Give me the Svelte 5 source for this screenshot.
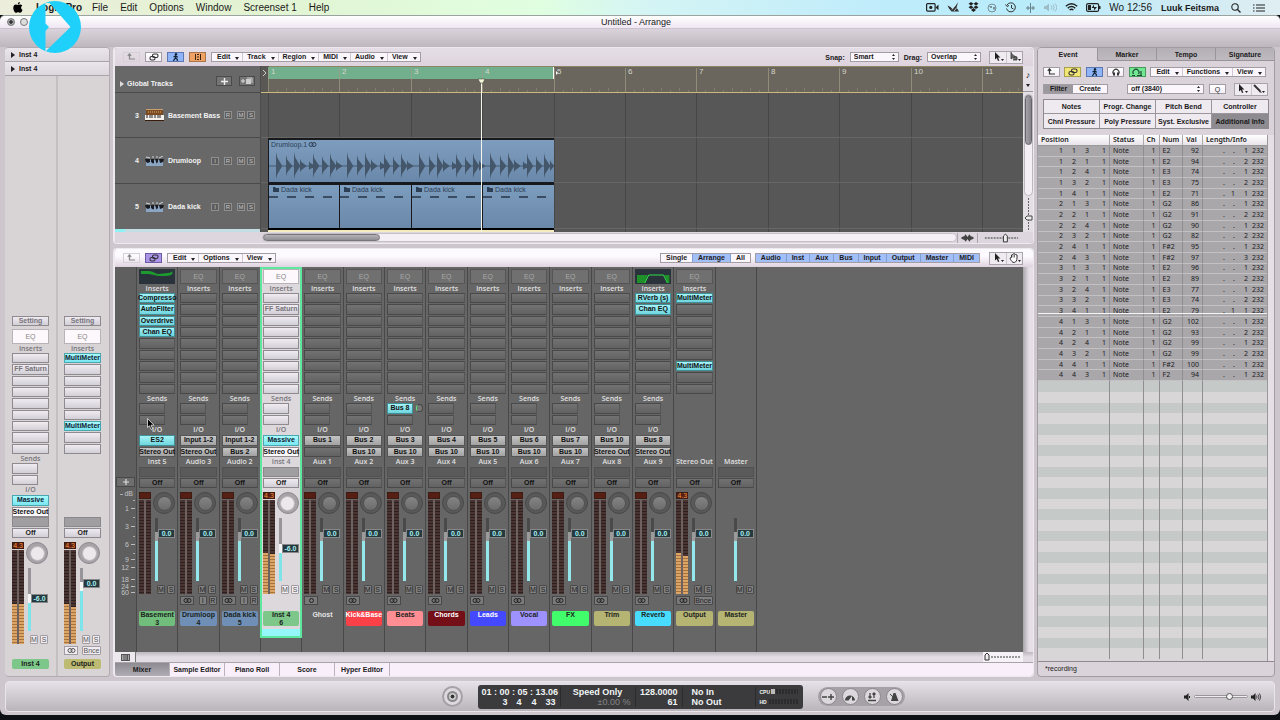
<script lang="ts">
	type Strip = {
		eq?: 'low' | 'band' | 'none';
		inserts?: Record<number, string>;
		noInserts?: boolean;
		sends?: string[] | null;
		io?: string[] | null;
		track?: string;
		level?: number[];
		value?: string;
		noMeter?: boolean;
		solo?: string;
		format?: 'stereo' | 'mono';
		extra?: string[];
		name: string;
		num?: string;
		color: string;
		text?: string;
		selected?: boolean;
	};

	const strips: Strip[] = [
		{ eq: 'low', inserts: { 0: 'Compresso', 1: 'AutoFilter', 2: 'Overdrive', 3: 'Chan EQ' }, io: ['ES2', 'Stereo Out'], track: 'Inst 5', name: 'Basement', num: '3', color: '#70bd7c' },
		{ io: ['Input 1-2', 'Stereo Out'], track: 'Audio 3', format: 'stereo', extra: ['I', 'R'], name: 'Drumloop', num: '4', color: '#6f8fb6' },
		{ io: ['Input 1-2', 'Bus 2'], track: 'Audio 2', format: 'stereo', extra: ['I', 'R'], name: 'Dada kick', num: '5', color: '#6f8fb6' },
		{ inserts: { 1: 'FF Saturn' }, io: ['Massive', 'Stereo Out'], track: 'Inst 4', level: [44, 43], value: '-6.0', name: 'Inst 4', num: '6', color: '#7cc789', selected: true },
		{ io: ['Bus 1', ''], track: 'Aux 1', format: 'mono', name: 'Ghost', color: 'transparent', text: '#e4e4e4' },
		{ io: ['Bus 2', 'Bus 10'], track: 'Aux 2', format: 'stereo', name: 'Kick&Base', color: '#fb4047', text: '#fff' },
		{ sends: ['Bus 8', ''], io: ['Bus 3', 'Bus 10'], track: 'Aux 3', format: 'stereo', name: 'Beats', color: '#ff8e94' },
		{ io: ['Bus 4', 'Bus 10'], track: 'Aux 4', format: 'stereo', name: 'Chords', color: '#740f17', text: '#fff' },
		{ io: ['Bus 5', 'Bus 10'], track: 'Aux 5', format: 'stereo', name: 'Leads', color: '#4448ff', text: '#fff' },
		{ io: ['Bus 6', 'Bus 10'], track: 'Aux 6', format: 'stereo', name: 'Vocal', color: '#9d92ff' },
		{ io: ['Bus 7', 'Bus 10'], track: 'Aux 7', format: 'stereo', name: 'FX', color: '#41fd6b' },
		{ io: ['Bus 10', 'Stereo Out'], track: 'Aux 8', format: 'stereo', name: 'Trim', color: '#b5b473' },
		{ eq: 'band', inserts: { 0: 'RVerb (s)', 1: 'Chan EQ' }, io: ['Bus 8', 'Stereo Out'], track: 'Aux 9', format: 'stereo', name: 'Reverb', color: '#48dcff' },
		{ inserts: { 0: 'MultiMeter', 6: 'MultiMeter' }, sends: null, io: null, track: 'Stereo Out', level: [44, 40], format: 'stereo', extra: ['Bnce'], name: 'Output', color: '#b5b473' },
		{ eq: 'none', noInserts: true, sends: null, io: null, track: 'Master', noMeter: true, solo: 'D', name: 'Master', color: '#b5b473' }
	];

	const sideStrips: Strip[] = [
		{ inserts: { 1: 'FF Saturn' }, io: ['Massive', 'Stereo Out'], level: [43, 43], value: '-6.0', name: 'Inst 4', color: '#7cc789' },
		{ inserts: { 0: 'MultiMeter', 6: 'MultiMeter' }, sends: null, io: null, level: [43, 39], format: 'stereo', extra: ['Bnce'], name: 'Output', color: '#bdba72' }
	];

	const live = ['ES2', 'Massive'];
	const faderPos = (v?: string) => (v === '-6.0' ? 51 : 74);

	const tracks = [
		{ num: 3, name: 'Basement Bass', icon: 'keys', buttons: ['R', 'M', 'S'] },
		{ num: 4, name: 'Drumloop', icon: 'drums', buttons: ['I', 'R', 'M', 'S'] },
		{ num: 5, name: 'Dada kick', icon: 'drums', buttons: ['I', 'R', 'M', 'S'] }
	];

	// timeline geometry
	const START = 7;
	const BAR = 71.4;
	const bars = Array.from({ length: 11 }, (_, i) => i);
	const barX = (i: number) => Math.round(START + i * BAR);

	// [offset in bar, half height]
	const hits = [[8, 14], [18, 11], [26, 14], [32, 7], [41, 5], [45, 13], [54, 10], [62, 13], [68, 6]];
	const wave = [0, 1, 2, 3]
		.flatMap((b) => hits.map(([o, h]) => {
			const x = barX(b) + o;
			const w = Math.min(6, barX(4) - x);
			return `M${x} ${100 - h}L${x + 1.2} ${100 - h * 0.6}L${x + w} 99.5V100.5L${x + 1.2} ${100 + h * 0.6}L${x} ${100 + h - 1}Z`;
		}))
		.join('');

	const notes = [
		['1 1 3 1', 'E2', 92, '. . 1'], ['1 2 1 1', 'E2', 94, '. . 2'], ['1 2 4 1', 'E3', 74, '. . 1'],
		['1 3 2 1', 'E3', 75, '. . 2'], ['1 4 1 1', 'E2', 71, '. 1 1'], ['2 1 3 1', 'G2', 86, '. . 1'],
		['2 2 1 1', 'G2', 91, '. . 2'], ['2 2 4 1', 'G2', 90, '. . 1'], ['2 3 2 1', 'G2', 82, '. . 2'],
		['2 4 1 1', 'F#2', 95, '. . 1'], ['2 4 3 1', 'F#2', 97, '. . 3'], ['3 1 3 1', 'E2', 96, '. . 1'],
		['3 2 1 1', 'E2', 89, '. . 2'], ['3 2 4 1', 'E3', 77, '. . 1'], ['3 3 2 1', 'E3', 74, '. . 2'],
		['3 4 1 1', 'E2', 79, '. 1 1'], ['4 1 3 1', 'G2', 102, '. . 1'], ['4 2 1 1', 'G2', 93, '. . 2'],
		['4 2 4 1', 'G2', 99, '. . 1'], ['4 3 2 1', 'G2', 99, '. . 2'], ['4 4 1 1', 'F#2', 100, '. . 1'],
		['4 4 3 1', 'F2', 94, '. . 1']
	] as [string, string, number, string][];
	const emptyRows = Array.from({ length: 26 }, (_, i) => i);

	const filters = ['Notes', 'Progr. Change', 'Pitch Bend', 'Controller', 'Chnl Pressure', 'Poly Pressure', 'Syst. Exclusive', 'Additional Info'];
	const scale = [['dB', 4], ['1', 19], ['3', 37], ['6', 55], ['9', 70], ['12', 78], ['18', 90], ['24', 97], ['60', 103]] as [string, number][];

	let editor = $state('Mixer');
	let listTab = $state('Event');
</script>

<svelte:head>
	<title>Untitled - Arrange</title>
</svelte:head>

{#snippet pointer()}
	<svg width="11" height="10" viewBox="0 0 11 10"><path d="M2 0v7.5l1.8-1.6L5 9l1.3-.6L5 5.5h2.4z" fill="#222" /><path d="M8 7h3L9.500 9z" fill="#222" /></svg>
{/snippet}

{#snippet back()}
	<svg width="9" height="8" viewBox="0 0 9 8"><path d="M2.500 1v5H8M.8 2.800L2.500.8l1.700 2" fill="none" stroke="currentColor" stroke-width="1.200" /></svg>
{/snippet}

{#snippet chain()}
	<svg width="10" height="8" viewBox="0 0 10 8"><g fill="none" stroke="currentColor" stroke-width="1.100"><rect x="3.500" y="1" width="5.500" height="3.500" rx="1.500" /><rect x="1" y="3.500" width="5" height="3.500" rx="1.500" /></g></svg>
{/snippet}

{#snippet runner()}
	<svg width="9" height="9" viewBox="0 0 9 9"><circle cx="5" cy="1.300" r="1.200" fill="#123" /><path d="M5 2.500L4.300 5.200 2.300 8M4.300 5l2 1.300V8M2.500 4l2-1 2.300 1.300" fill="none" stroke="#123" stroke-width="1.200" /></svg>
{/snippet}

{#snippet rings(mono: boolean)}
	<svg width="9" height="5" viewBox="0 0 9 5"><g fill="none" stroke="currentColor">{#if mono}<circle cx="4.500" cy="2.500" r="2" />{:else}<circle cx="3" cy="2.500" r="2" /><circle cx="6" cy="2.500" r="2" />{/if}</g></svg>
{/snippet}

{#snippet menus(items: string[])}
	<div class="menus">
		{#each items as item}
			<button>{item}<i class="caret"></i></button>
		{/each}
	</div>
{/snippet}

{#snippet channel(s: Strip, side: boolean)}
	<div class="strip" class:light={side || s.selected} class:selected={s.selected} class:side>
		{#if side}<button class="slot setting">Setting</button>{/if}
		{#if s.eq === 'none'}
			<div class="eq-gap"></div>
		{:else if s.eq}
			<svg class="eq-curve" viewBox="0 0 37 15" preserveAspectRatio="none">
				<rect width="37" height="15" fill="#2a323b" />
				{#if s.eq === 'low'}
					<path d="M2 2h8c5 0 6 3 10 3s6-1 9-1 4-1 5-2v3c-3 2-5 2-9 2s-7 0-10-1-6-1-13-1z" fill="#1d9a2e" />
				{:else}
					<path d="M2 6h11l-3 8H2zM30 6h5v8h-2z" fill="#1f8f2a" /><path d="M10 14l4-8h15l4 8" fill="none" stroke="#2fe04a" />
				{/if}
			</svg>
		{:else}
			<button class="eq">EQ</button>
		{/if}
		<div class="caption">{s.noInserts ? '' : 'Inserts'}</div>
		<div class="inserts">
			{#if !s.noInserts}
				{#each Array(9) as _, i}
					<button class="slot" class:on={s.inserts?.[i] && s.inserts[i] !== 'FF Saturn'} aria-label="Insert {i + 1}">{s.inserts?.[i] ?? ''}</button>
				{/each}
			{/if}
		</div>
		<div class="caption">{s.sends === null ? '' : 'Sends'}</div>
		<div class="sends">
			{#if s.sends !== null}
				{#each s.sends ?? ['', ''] as send, i}
					<div class="send">
						<button class="slot" class:on={send} aria-label="Send {i + 1}">{send}</button>
						{#if send}<i class="send-knob"></i>{/if}
					</div>
				{/each}
			{/if}
		</div>
		<div class="caption io-label">{s.io === null ? '' : 'I/O'}</div>
		<div class="io">
			{#each s.io ?? [] as io}
				<button class="slot" class:route={io} class:on={live.includes(io)} aria-label={io || 'No output'}>{io}</button>
			{/each}
		</div>
		{#if !side}<div class="caption track">{s.track}</div>{/if}
		<div class="group"></div>
		<button class="slot auto">Off</button>
		<div class="levels">
			<div class="meter">
				{#if !s.noMeter}
					<div class="peak">{s.level ? '4.3' : ''}</div>
					<div class="bars">
						{#each s.level ?? [0, 0] as l}
							<div class="bar"><div class="fill" style="height: {l}%"></div></div>
						{/each}
					</div>
				{/if}
			</div>
			<div class="controls">
				<div class="pan" class:hidden={s.noMeter}><i></i></div>
				<div class="fader">
					<input type="range" aria-label="{s.name} volume" value={faderPos(s.value)} style="--v: {faderPos(s.value)}%" />
					<output style="bottom: {faderPos(s.value)}%">{s.value ?? '0.0'}</output>
				</div>
				<div class="pair"><button>M</button><button>{s.solo ?? 'S'}</button></div>
			</div>
		</div>
		<div class="format">
			{#if s.format}<button class="rings" aria-label={s.format}>{@render rings(s.format === 'mono')}</button>{/if}
			<div class="pair">
				{#each s.extra ?? [] as e}<button class:wide={e.length > 1}>{e}</button>{/each}
			</div>
		</div>
		<div class="name" style="background: {s.color}; color: {s.text ?? '#1c2420'}">
			<span>{s.name}</span>{#if s.num}<span>{s.num}</span>{/if}
		</div>
	</div>
{/snippet}

<div class="desktop">
	<header class="menubar">
		<svg class="apple" width="10" height="11" viewBox="0 0 10 11"><path d="M6.800 0C5.500.2 4.800 1.200 4.900 2.400 6 2.400 6.900 1.300 6.800 0zM5 3C4.300 3 3.700 2.600 2.900 2.600 1.500 2.600.3 3.800.3 5.900.3 8.300 1.900 10.800 3.100 10.800c.7 0 1.100-.5 2-.5s1.200.5 2 .5c1 0 2-1.700 2.400-2.900C7.700 7 7.700 4.500 9.200 3.700 8.700 2.900 7.900 2.600 7.100 2.600 6.200 2.600 5.700 3 5 3z" /></svg>
		<strong>Logic Pro</strong>
		<nav>
			{#each ['File', 'Edit', 'Options', 'Window', 'Screenset 1', 'Help'] as m}<button>{m}</button>{/each}
		</nav>
		<div class="status">
			<svg width="13" height="9" viewBox="0 0 13 9"><rect x=".6" y=".6" width="8.500" height="7.500" rx="1" fill="none" stroke="#222" stroke-width="1.200" /><circle cx="4.800" cy="4.400" r="1.600" fill="#222" /><path d="M9.500 4.400l3-2.800v5.600z" fill="#222" /></svg>
			<svg width="13" height="11" viewBox="0 0 13 11"><path d="M.5 3.500l3 1.500 2 2L11 .5 9.500 5.500 12 9.500H4.500L2 6.500z" fill="#333" /><path d="M5 7.500l4-5M7 9l2.500-3" stroke="#cfeefa" stroke-width=".8" /></svg>
			<svg width="11" height="11" viewBox="0 0 11 11"><path d="M3 0l2.500 1.800L3 3.500.5 1.800zM8 0l2.500 1.800L8 3.500 5.500 1.800zM3 3.500l2.500 1.800L3 7 .5 5.300zM8 3.500l2.500 1.800L8 7 5.500 5.300zM5.500 6L8 8 5.500 10 3 8z" fill="#222" /></svg>
			<svg width="10" height="10" viewBox="0 0 10 10"><circle cx="5" cy="5" r="4" fill="none" stroke="#7a9096" /><path d="M2 3h3v2H3.500zM6 4h2.500v2.500H6z" fill="#7a9096" /></svg>
			<svg width="12" height="11" viewBox="0 0 12 11"><path d="M2 3a4.500 4.500 0 1 1-.5 3.500M6.500 3v3l2 1M.5 2.500L2 4.500l2-1" fill="none" stroke="#333" /></svg>
			<svg width="11" height="10" viewBox="0 0 11 10"><path d="M5.500 0v10M1 5h9M3 3v4M8 3v4" stroke="#6a8088" fill="none" /></svg>
			<svg width="13" height="9" viewBox="0 0 13 9"><path d="M0 3h2l3-2.500v8L2 6H0z" fill="#9fbcc6" /><path d="M7 2.500q1.500 2 0 4M9 1.500q2.500 3 0 6M11 .5q3.500 4 0 8" fill="none" stroke="#9fbcc6" /></svg>
			<svg width="13" height="9" viewBox="0 0 13 9"><path d="M.8 3.300q5.700-5 11.400 0M2.700 5.200q3.800-3.300 7.600 0M4.600 7q1.900-1.600 3.800 0" fill="none" stroke="#222" stroke-width="1.400" /></svg>
			<svg width="15" height="9" viewBox="0 0 15 9"><rect x=".6" y=".6" width="12" height="7.800" rx="1.500" fill="none" stroke="#222" stroke-width="1.200" /><path d="M2 2h3v5H2zM8 1.500L5.500 5H8v2.500L11 4H8zM13 3h1.500v3H13z" fill="#222" /></svg>
			<span>Wo 12:56</span>
			<b>Luuk Feitsma</b>
			<svg width="10" height="10" viewBox="0 0 10 10"><circle cx="4" cy="4" r="3.200" fill="none" stroke="#222" stroke-width="1.100" /><path d="M6.300 6.300L9.500 9.500" stroke="#222" stroke-width="1.300" /></svg>
			<svg width="12" height="8" viewBox="0 0 12 8"><path d="M0 1h1.500M3 1h9M0 4h1.500M3 4h9M0 7h1.500M3 7h9" stroke="#222" stroke-width="1.200" /></svg>
		</div>
	</header>

	<div class="window">
		<div class="titlebar">
			<div class="lights"><i></i><i></i></div>
			<h1>Untitled - Arrange</h1>
		</div>
		<div class="toolband"></div>

		<div class="main">
			<aside class="inspector panel">
				<button class="fold"><i class="tri"></i>Inst 4</button>
				<button class="fold"><i class="tri"></i>Inst 4</button>
				<div class="side-strips">
					{#each sideStrips as s}{@render channel(s, true)}{/each}
				</div>
			</aside>

			<div class="center">
				<section class="arrange panel">
					<div class="toolbar">
						<button class="tool ghost" aria-label="Back">{@render back()}</button>
						<button class="tool" aria-label="Link">{@render chain()}</button>
						<button class="tool blue" aria-label="Catch">{@render runner()}</button>
						<button class="tool orange" aria-label="Flex">
							<svg width="8" height="8" viewBox="0 0 8 8"><path d="M1.500 1v6M6.500 1v6" stroke="#3a2410" fill="none" /><path d="M3 1.500h2M3 4h2M3 6.500h2" stroke="#3a2410" /></svg>
						</button>
						{@render menus(['Edit', 'Track', 'Region', 'MIDI', 'Audio', 'View'])}
						<div class="right-tools">
							<label for="snap">Snap:</label>
							<select id="snap" class="snap"><option>Smart</option></select>
							<label for="drag">Drag:</label>
							<select id="drag" class="drag"><option>Overlap</option></select>
							<div class="cursor-tools">
								<button aria-label="Pointer">{@render pointer()}</button>
								<button aria-label="Second tool"><svg width="12" height="10" viewBox="0 0 12 10"><path d="M2 0v7l2-1.500 1 .5V3.500M5 4l3 1v3H4" fill="#666" stroke="#333" stroke-width=".8" /><path d="M9 7h3l-1.500 2z" fill="#222" /></svg></button>
							</div>
						</div>
					</div>
					<div class="arrange-body">
						<div class="track-list">
							<div class="global">
								<i class="tri"></i><b>Global Tracks</b>
								<button aria-label="Add track"><svg width="7" height="7" viewBox="0 0 7 7"><path d="M3.500 0v7M0 3.500h7" stroke="#eee" stroke-width="1.400" /></svg></button>
								<button aria-label="Duplicate track"><svg width="12" height="8" viewBox="0 0 12 8"><path d="M0 4h4M2 2v4" stroke="#ddd" /><rect x="5" y="2" width="5" height="5" fill="#ccc" /><path d="M6 1h5v5" stroke="#ccc" fill="none" /></svg></button>
							</div>
							{#each tracks as t}
								<div class="track-head">
									<span class="num">{t.num}</span>
									{#if t.icon === 'keys'}
										<svg width="19" height="12" viewBox="0 0 19 12"><rect x="1" width="17" height="6" fill="#7a4a22" /><path d="M1 .5h17" stroke="#caa070" /><path d="M3 3h13" stroke="#e0b060" stroke-dasharray="1 1" /><rect y="6" width="19" height="5" fill="#f3f0ec" /><path d="M2 6v3M5 6v3M7 6v3M10 6v3M13 6v3M15 6v3" stroke="#222" /><path d="M0 11.500h19" stroke="#3a1a08" /></svg>
									{:else}
										<svg width="19" height="10" viewBox="0 0 19 10"><path d="M1 4h17v6H1z" fill="#8ba6c4" /><path d="M0 3h5v3l-2 1-2-1zM6 3h3v4l-1 .5L6 6zM10 3h3v3l-1.500 1.500zM14 3h5l-1 3-3 1z" fill="#191c22" /><path d="M1 1l4 1M8 0v2M12 0v2M18 0l-4 2" stroke="#cfd6e0" /></svg>
									{/if}
									<b>{t.name}</b>
									<div class="mini">
										{#each t.buttons as b}<button>{b}</button>{/each}
									</div>
								</div>
							{/each}
							<div class="next-track"></div>
						</div>
						<svg class="timeline" height="166">
							<defs>
								<linearGradient id="region" x1="0" x2="0" y1="0" y2="1"><stop offset="0" stop-color="#7d9dbf" /><stop offset="1" stop-color="#6a88a9" /></linearGradient>
							</defs>
							<rect width="100%" height="166" fill="#575757" />
							<rect width="100%" height="26" fill="#6a665d" />
							<rect width="100%" height="1" fill="#8c8463" />
							<rect width="8" height="26" fill="#5a5854" />
							<path d="M2 4l3 3-3 3" fill="none" stroke="#ccc" />
							<rect x={START} y="1" width={barX(4) - START} height="12" fill="#72b08d" />
							{#each bars as i}
								<path d="M{barX(i) + 0.5} 26v140" stroke="#474747" />
								<path d="M{barX(i) + 0.5} 2v24" stroke="#a39d84" stroke-opacity=".7" />
								{#each [1, 2, 3, 4, 5, 6, 7] as q}<path d="M{barX(i) + q * 9 + 0.5} {q % 2 ? 24 : 22}v3" stroke="#8d8670" stroke-opacity=".7" />{/each}
								<text x={barX(i) + 3} y="8" font-size="8" fill="#d6d6cc">{i + 1}</text>
							{/each}
							<path d="M0 26.500h2000" stroke="#cdb97c" />
							<path d="M0 71.500h2000M0 116.500h2000M0 162.500h2000" stroke="#666" />
							<path d="M292.500 1v12" stroke="#fff" stroke-width="1" />
							<path d="M295 5l2 2-2 2z" fill="#fff" />
							<rect x={START} y="72" width={barX(4) - START} height="45" fill="#17191c" />
							<rect x={START + 1} y="74" width={barX(4) - START - 1} height="42" fill="url(#region)" />
							<path d="M{START + 1} 100h{barX(4) - START - 2}" stroke="#46586c" />
							<path d={wave} fill="#43566a" />
							<text x={START + 3} y="81" font-size="7" fill="#2d3f54">Drumloop.1</text>
							<g fill="none" stroke="#2d3f54"><circle cx="50" cy="78.500" r="2" /><circle cx="53" cy="78.500" r="2" /></g>
							{#each [0, 1, 2, 3] as i}
								<rect x={barX(i)} y="117" width={barX(i + 1) - barX(i)} height="46" fill="#17191c" />
								<rect x={barX(i) + 1} y="119" width={barX(i + 1) - barX(i) - 1} height="43" fill="url(#region)" />
								<path d="M{barX(i) + 5} 121h2l1 1h3v4h-6z" fill="#2d3f54" />
								<text x={barX(i) + 13} y="126" font-size="7" fill="#2d3f54">Dada kick</text>
								<path d="M{barX(i) + 1} 131h9m9 0h9m9 0h9m9 0h9" stroke="#3a4c61" stroke-width="2" />
							{/each}
							<rect x={START} y="162" width={barX(4) - START} height="2" fill="#000" />
							<rect x={START} y="164" width={barX(4) - START} height="2" fill="#f4ecc0" />
							<path d="M220.500 13v153" stroke="#f6f6ea" />
							<path d="M217 13h7l-2 4h-3z" fill="#f4f8d8" stroke="#333" stroke-width=".5" />
						</svg>
						<div class="vscroll">
							<div class="note-menu"><span>♪</span><i class="caret"></i></div>
							<div class="rail"><i></i></div>
							<svg class="vzoom" width="9" height="36" viewBox="0 0 9 36"><path d="M4.500 2v33" stroke="#666" stroke-dasharray="2 1" /><path d="M1 22l2-2h5v4H3z" fill="#eee" stroke="#444" /></svg>
						</div>
					</div>
					<div class="hscroll">
						<div class="gutter"></div>
						<div class="rail"><i></i></div>
						<svg width="20" height="10" viewBox="0 0 20 10"><path d="M3 5l3-2v1l2-3 2 3 2-3 2 3V3l3 2-3 2V6l-2 3-2-3-2 3-2-3v1z" fill="#444" /></svg>
						<svg class="zoomer" width="46" height="10" viewBox="0 0 46 10"><path d="M7 5h34" stroke="#888" stroke-dasharray="2 1" stroke-width="2" /><path d="M26 3l2-2 2 2v6h-4z" fill="#eee" stroke="#333" /></svg>
					</div>
				</section>

				<section class="mixer panel">
					<div class="toolbar">
						<button class="tool ghost" aria-label="Back">{@render back()}</button>
						<button class="tool violet" aria-label="Link">{@render chain()}</button>
						{@render menus(['Edit', 'Options', 'View'])}
						<div class="right-tools">
							<div class="segments">
								{#each ['Single', 'Arrange', 'All'] as v}<button class:active={v === 'Arrange'}>{v}</button>{/each}
							</div>
							<div class="segments">
								{#each ['Audio', 'Inst', 'Aux', 'Bus', 'Input', 'Output', 'Master', 'MIDI'] as v}<button class="active">{v}</button>{/each}
							</div>
							<div class="cursor-tools">
								<button aria-label="Pointer">{@render pointer()}</button>
								<button aria-label="Hand"><svg width="12" height="10" viewBox="0 0 12 10"><path d="M1 5l1.500-.5V2l1.300-.6L5 .6l1.300.8L8 2v3c0 2.500-1 4-2.500 4.400H4C2.500 8.500 1.500 6.500 1 5z" fill="#fff" stroke="#333" /><path d="M4 2v2.500M5.500 1.500v3" stroke="#333" stroke-width=".7" /><path d="M9 7h3l-1.500 2z" fill="#222" /></svg></button>
							</div>
						</div>
					</div>
					<div class="mixer-body">
						<div class="scale">
							<button class="add" aria-label="Add channel"><svg width="6" height="6" viewBox="0 0 6 6"><path d="M3 0v6M0 3h6" stroke="#ddd" stroke-width="1.200" /></svg></button>
							<svg width="21" height="110" viewBox="0 0 21 110">
								{#each scale as [label, y]}
									<text x={label === 'dB' ? 18 : 14} y={y + 3} font-size="7" text-anchor="end" fill="#c4c4c4">{label}</text>
									{#if label !== 'dB'}<path d="M16 {y + 0.5}h4" stroke="#bbb" />{/if}
								{/each}
								<path d="M5 5.500h3M18 11.500h2M18 28.500h2M18 47.500h2M18 64.500h2" stroke="#aaa" />
							</svg>
						</div>
						<div class="strips">
							{#each strips as s}
								<div class="cell">{@render channel(s, false)}</div>
							{/each}
						</div>
						<div class="rail-v"></div>
					</div>
					<div class="mixer-foot">
						<div class="foot-icon"><svg width="9" height="7" viewBox="0 0 9 7"><rect x=".5" y=".5" width="8" height="6" fill="#aaa" stroke="#555" /><path d="M3 1v5M5 1v5M6.500 1v5" stroke="#555" /></svg></div>
						<svg width="40" height="10" viewBox="0 0 40 10"><path d="M8 5h30" stroke="#999" stroke-width="2" stroke-dasharray="2 1" /><path d="M2 3l2-2 2 2v5H2z" fill="#eee" stroke="#333" /></svg>
					</div>
					<nav class="tabs">
						{#each ['Mixer', 'Sample Editor', 'Piano Roll', 'Score', 'Hyper Editor'] as t}
							<button class:active={editor === t} onclick={() => (editor = t)}>{t}</button>
						{/each}
					</nav>
				</section>
			</div>

			<aside class="lists panel">
				<nav class="list-tabs">
					{#each ['Event', 'Marker', 'Tempo', 'Signature'] as t}
						<button class:active={listTab === t} onclick={() => (listTab = t)}>{t}</button>
					{/each}
				</nav>
				<div class="list-tools">
					<button class="tool" aria-label="Back">{@render back()}</button>
					<button class="tool yellow" aria-label="Link">{@render chain()}</button>
					<button class="tool blue" aria-label="Catch">{@render runner()}</button>
					<button class="tool" aria-label="Listen"><svg width="10" height="8" viewBox="0 0 10 8"><path d="M2.500 6a3 3 0 1 1 5 0" fill="none" stroke="#333" stroke-width="1.200" /><path d="M2 4.500h2v3H2zM6 4.500h2v3H6z" fill="#333" /></svg></button>
					<button class="tool green" aria-label="MIDI out"><svg width="12" height="8" viewBox="0 0 12 8"><path d="M2.500 6a3 3 0 1 1 5 0M1 7.500h3M6 7.500h5M10 3v4" fill="none" stroke="#243" stroke-width="1.200" /></svg></button>
					{@render menus(['Edit', 'Functions', 'View'])}
				</div>
				<div class="list-tools second">
					<div class="segments grey"><button class="active">Filter</button><button>Create</button></div>
					<select aria-label="Quantize" class="quant"><option>off (3840)</option></select>
					<button class="tool">Q</button>
					<div class="cursor-tools">
						<button aria-label="Pointer">{@render pointer()}</button>
						<button aria-label="Pencil"><svg width="12" height="10" viewBox="0 0 12 10"><path d="M1 1l6 6" stroke="#333" stroke-width="2" /><path d="M7 6l2 3-3-1z" fill="#333" /><path d="M9 7h3l-1.500 2z" fill="#222" /></svg></button>
					</div>
				</div>
				<div class="filters">
					{#each filters as f}<button class:active={f === 'Additional Info'}>{f}</button>{/each}
				</div>
				<div class="events">
					<table>
						<colgroup><col class="c-pos" /><col class="c-status" /><col class="c-ch" /><col class="c-num" /><col class="c-val" /><col /></colgroup>
						<thead>
							<tr><th>Position</th><th>Status</th><th>Ch</th><th>Num</th><th>Val</th><th>Length/Info</th></tr>
						</thead>
						<tbody>
							{#each notes as [pos, num, val, len], i}
								<tr class="note" class:current={i === 15}>
									<td><div class="pos">{#each pos.split(' ') as p}<span>{p}</span>{/each}</div></td>
									<td>Note</td>
									<td class="r">1</td>
									<td>{num}</td>
									<td class="r">{val}</td>
									<td><div class="len">{#each len.split(' ') as p}<span>{p}</span>{/each}<span>232</span></div></td>
								</tr>
							{/each}
							{#each emptyRows as _}
								<tr class="empty"><td></td><td></td><td></td><td></td><td></td><td></td></tr>
							{/each}
						</tbody>
					</table>
					<div class="rail-v"></div>
				</div>
				<div class="list-status">*recording</div>
			</aside>
		</div>

		<footer class="transport">
			<div class="rec-side"><button class="record" aria-label="Record"><i></i></button></div>
			<div class="lcd">
				<div class="time"><span>01 : 00 : 05 : 13.06</span><div class="beats"><span>3</span><span>4</span><span>4</span><span>33</span></div></div>
				<div class="speed"><span>Speed Only</span><span class="dim">±0.00 %</span></div>
				<div class="tempo"><span>128.0000</span><span>61</span></div>
				<div class="midi"><span>No In</span><span>No Out</span></div>
				<div class="cpu"><span>CPU <i></i><em></em></span><span>HD <em></em></span></div>
			</div>
			<div class="mode-side">
				<div class="modes">
					<button aria-label="Replace"><svg width="12" height="12" viewBox="0 0 12 12"><path d="M0 6h5M6 6h6M9 3v6" stroke="#444" stroke-width="1.400" /></svg></button>
					<button aria-label="Tuner"><svg width="12" height="12" viewBox="0 0 12 12"><path d="M1 9.500a5 5 0 1 1 10 0H8L8 5 4.500 9.500z" fill="#444" /></svg></button>
					<button aria-label="Sync"><svg width="12" height="12" viewBox="0 0 12 12"><path d="M2 9.500h8M4 2v5M8 2v5M2.500 5.500L4 7l1.500-1.500M6.500 3.500L8 2l1.500 1.500" fill="none" stroke="#444" stroke-width="1.300" /></svg></button>
					<button aria-label="Metronome"><svg width="12" height="12" viewBox="0 0 12 12"><path d="M5.500 2h2l3 8H3z" fill="#444" /><path d="M2 3l5 5" stroke="#444" /></svg></button>
				</div>
				<div class="volume">
					<svg width="7" height="8" viewBox="0 0 7 8"><path d="M0 2.500h2L4.500 0v8L2 5.500H0z" fill="#222" /><path d="M5.500 3v2" stroke="#222" /></svg>
					<input type="range" aria-label="Master volume" value="70" />
					<svg width="10" height="8" viewBox="0 0 10 8"><path d="M0 2.500h2L4.500 0v8L2 5.500H0z" fill="#222" /><path d="M5.500 2.500q1 1.500 0 3M7 1.500q2 2.500 0 5M8.500.5q2.500 3.500 0 7" fill="none" stroke="#222" stroke-width=".8" /></svg>
				</div>
			</div>
		</footer>
	</div>

	<svg class="badge" width="54" height="54" viewBox="0 0 54 54"><path fill-rule="evenodd" d="M27 1a26 26 0 1 1 0 52 26 26 0 1 1 0-52zM17.500 3v20.500l3.500 3.500-3.500 4v20.500L42.500 27 21.500 3z" fill="#1ed0fa" /></svg>
	<svg class="mouse" width="8" height="12" viewBox="0 0 8 12"><path d="M.5.5v9l2-1.800L4 11.500l1.500-.7L4 7.200h3z" fill="#000" stroke="#fff" stroke-width=".7" /></svg>
</div>

<style>
	:global(body) { background: #0d1116; }
	.desktop {
		position: relative;
		display: flex;
		flex-direction: column;
		min-height: 100vh;
		box-sizing: border-box;
		padding-bottom: 5px;
		font: 7px/9px "Liberation Sans", Arial, sans-serif;
		color: #1a1a1a;
	}
	.desktop :global(*) { box-sizing: border-box; }
	svg { flex: none; display: block; }
	button {
		font: inherit;
		color: inherit;
		border: 0;
		padding: 0;
		margin: 0;
		background: none;
		white-space: nowrap;
	}
	.menubar {
		display: flex;
		align-items: center;
		height: 15px;
		padding: 0 15px 0 13px;
		font-size: 10px;
		line-height: 14px;
		background: linear-gradient(90deg, #eceedb, #e2f3d2 20%, #e0ffe0 42%, #d5f5f4 50%, #c0ecfb 68%, #b9ecfb 80%, #cdeaf4 92%, #dfeef2);
	}
	.menubar strong { margin-left: 13px; width: 56px; }
	.menubar nav { display: flex; gap: 12px; }
	.status { margin-left: auto; display: flex; align-items: center; gap: 8px; }
	.status b { margin: 0 4px 0 1px; font-size: 9px; }
	.status > svg:last-child { margin-left: 4px; }

	.window {
		flex: 1;
		display: flex;
		flex-direction: column;
		border-top: 1px solid #9ba3a0;
		border-radius: 5px 5px 6px 6px;
		background: #cdc7cd;
	}
	.titlebar {
		position: relative;
		display: flex;
		justify-content: center;
		align-items: center;
		height: 12px;
		padding-right: 8px;
		background: linear-gradient(#fff, #efe6f2);
		border-radius: 5px 5px 0 0;
	}
	.titlebar h1 { margin: 0; font-size: 9px; font-weight: normal; line-height: 12px; }
	.lights { position: absolute; left: 7px; display: flex; gap: 5px; }
	.lights i { width: 8px; height: 8px; border-radius: 50%; border: 1px solid #777; background: #ddd; }
	.lights i:first-child { background: radial-gradient(#333 35%, #aaa 45%); }
	.toolband { height: 19px; border-top: 1px solid #cbc3cd; background: linear-gradient(#dad3db, #bdb8bd); }

	.main { flex: 1; display: flex; gap: 3px; padding: 0 5px 0 5px; min-height: 0; }
	.panel { background: #ddd6de; border-radius: 4px; overflow: hidden; }

	/* inspector */
	.inspector { width: 105px; flex: none; display: flex; flex-direction: column; background: #d8d4d6; border: 1px solid #b1acb1; border-left: 0; }
	.fold {
		display: flex;
		align-items: center;
		height: 14px;
		gap: 4px;
		padding-left: 6px;
		border-bottom: 1px solid #a9a4a9;
		background: linear-gradient(#ebe6ec, #dcd7dc);
		font-weight: bold;
	}
	.tri { width: 0; height: 0; border-left: 4px solid #222; border-top: 3px solid transparent; border-bottom: 3px solid transparent; }
	.side-strips { flex: 1; display: grid; grid-template-columns: 52px 52px; align-items: end; background: linear-gradient(90deg, transparent 51px, #c3bfc2 51px 53px, transparent 53px); }

	/* toolbars */
	.center { flex: 1; min-width: 0; display: flex; flex-direction: column; gap: 4px; }
	.arrange, .mixer { border: 1px solid #8f8b90; border-width: 1px 1px 1px 2px; border-color: #eee9ef; box-shadow: inset 0 0 0 1px #8f8b90; }
	.toolbar {
		display: flex;
		align-items: center;
		height: 18px;
		padding: 0 10px 0 8px;
		background: linear-gradient(#e6dee7, #ddd3de);
		font-weight: bold;
	}
	.mixer .toolbar { background: linear-gradient(#fdfaff 40%, #dfd3e0); }
	.tool {
		display: flex;
		align-items: center;
		justify-content: center;
		width: 17px;
		height: 10px;
		border: 1px solid #a29ca5;
		background: linear-gradient(#fff, #f3eef5);
		color: #333;
	}
	.toolbar .tool { margin-right: 5px; }
	.tool.ghost { border-color: #d8d0d9; background: none; color: #888; }
	.tool.blue { background: #8fb4f8; border-color: #5d78b0; }
	.tool.orange { background: #f0a264; border-color: #a8744a; }
	.tool.violet { background: #a994e8; border-color: #6d5aa5; }
	.tool.yellow { background: #f1e676; border-color: #a9a04e; }
	.tool.green { background: #6fe891; border-color: #4a9a60; }
	.menus { display: flex; height: 10px; padding-left: 1px; border: 1px solid #a29ca5; background: #fbf6fc; font-weight: bold; }
	.menus button { display: flex; align-items: center; gap: 5px; padding: 0 3px 0 4px; line-height: 8px; }
	.menus button + button { border-left: 1px solid #cfc8d0; }
	.caret { width: 0; height: 0; border-top: 3px solid #222; border-left: 2px solid transparent; border-right: 2px solid transparent; margin-top: 3px; }
	.right-tools { margin-left: auto; display: flex; align-items: center; gap: 5px; }
	select {
		appearance: none;
		height: 10px;
		padding: 0 3px;
		border: 1px solid #a29ca5;
		border-radius: 0;
		font: bold 7px/8px "Liberation Sans", Arial, sans-serif;
		color: #1a1a1a;
		background: #fbf6fc url("data:image/svg+xml,%3Csvg xmlns='http://www.w3.org/2000/svg' width='5' height='8'%3E%3Cpath d='M0 3l1.500-2L3 3zM0 5l1.500 2L3 5z' fill='%23222'/%3E%3C/svg%3E") no-repeat right 1px center;
	}
	.snap { width: 49px; }
	.drag { width: 54px; }
	.cursor-tools { display: flex; height: 13px; border: 1px solid #a9a3ab; background: #f0eaf1; margin-left: 3px; }
	.cursor-tools button { display: flex; align-items: center; justify-content: center; width: 16px; }
	.cursor-tools button + button { border-left: 1px solid #cbc5cc; }

	/* arrange */
	.arrange { height: 197px; flex: none; display: flex; flex-direction: column; }
	.arrange-body { display: flex; height: 166px; }
	.track-list { width: 146px; flex: none; background: #686868; color: #f2f2f2; border-right: 1px solid #4c4c4c; }
	.global { display: flex; align-items: center; gap: 3px; height: 26px; padding: 9px 5px 0 5px; }
	.global .tri { border-left-color: #ddd; }
	.global b { margin-right: auto; }
	.global button { display: flex; align-items: center; justify-content: center; width: 16px; height: 10px; margin: -5px 0 0 4px; border: 1px solid #4b4b4b; background: #757575; }
	.track-head {
		display: flex;
		align-items: center;
		height: 45px;
		border-top: 1px solid #4a4a4a;
		padding: 0 5px 0 20px;
	}
	.track-head + .track-head { height: 46px; }
	.num { width: 10px; font-weight: bold; }
	.track-head b { margin-left: 4px; }
	.mini { margin-left: auto; display: flex; gap: 3px; }
	.mini button { width: 8px; height: 8px; font-size: 6px; line-height: 6px; border: 1px solid #8f8f8f; background: #5c5c5c; color: #c8c8c8; }
	.mini button:nth-last-child(3), .mini button:nth-last-child(4) { margin-right: 2px; }
	.mini button:last-child { margin-left: -1px; }
	.next-track { height: 3px; background: linear-gradient(90deg, #8ff3f3 10px, #c3dfe5 10px); }
	.timeline { flex: 1; min-width: 0; font-family: "Liberation Sans", Arial, sans-serif; }
	.vscroll { width: 10px; flex: none; display: flex; flex-direction: column; align-items: center; background: #e4dee5; }
	.note-menu { display: flex; flex-direction: column; align-items: center; height: 26px; width: 100%; font-size: 9px; line-height: 18px; border-bottom: 1px solid #999; }
	.note-menu .caret { margin: 0; }
	.vscroll .rail { flex: 1; width: 9px; margin-top: 2px; border-radius: 5px; background: #f3eff4; border: 1px solid #bdb7be; }
	.vscroll .rail i { display: block; height: 50px; border-radius: 5px; border: 1px solid #66636a; background: linear-gradient(90deg, #a5a2a8, #858288); }
	.hscroll { flex: 1; display: flex; align-items: center; padding-right: 10px; background: #ddd6de; }
	.hscroll .gutter { width: 147px; }
	.hscroll .rail { flex: 1; height: 9px; border: 1px solid #c5bfc6; border-radius: 5px; background: #f3eff4; }
	.hscroll .rail i { display: block; width: 117px; height: 7px; border-radius: 4px; border: 1px solid #77747a; background: linear-gradient(#b6b3b8, #908d93); }
	.hscroll svg { border-left: 1px solid #aaa4ab; }

	/* mixer */
	.mixer { flex: 1; display: flex; flex-direction: column; min-height: 0; }
	.segments { display: flex; height: 10px; border: 1px solid #a29ca5; background: #fbf6fc; font-weight: bold; }
	.segments button { padding: 0 5px; line-height: 8px; }
	.segments button + button { border-left: 1px solid #7f9ed2; }
	.segments .active { background: #a3bff8; }
	.mixer .right-tools { gap: 4px; }
	.mixer .cursor-tools { margin-left: 5px; }
	.mixer-body { flex: 1; display: flex; background: #666; }
	.scale { width: 21px; flex: none; padding-top: 210px; background: #5f5f5f; }
	.scale text { font-family: "Liberation Sans", Arial, sans-serif; }
	.add { display: flex; align-items: center; justify-content: center; width: 19px; height: 10px; margin: 0 0 2px 1px; border: 1px solid #484848; background: #6e6e6e; }
	.strips { width: 621px; display: grid; grid-template-columns: repeat(15, minmax(0, 1fr)); border-left: 1px solid #484848; }
	.cell { border-right: 1px solid #484848; }
	.mixer-body .rail-v { margin-left: auto; width: 10px; background: linear-gradient(90deg, #a9a5aa, #e6dfe8 60%); }
	.strip { display: flex; flex-direction: column; padding: 2px 2px 0; min-width: 0; color: #e0e0e0; }
	.eq, .eq-curve, .eq-gap { height: 15px; width: 100%; }
	.eq { border: 1px solid #555; background: #707070; color: #a8a8a8; line-height: 12px; }
	.caption { display: flex; justify-content: center; height: 9px; white-space: nowrap; font: 600 7px/9px "Open Sans", "Noto Sans", sans-serif; }
	.io-label, .track { height: 10px; line-height: 10px; }
	.inserts { height: 101px; display: flex; flex-direction: column; gap: 1px; }
	.slot {
		flex: 1;
		width: 100%;
		min-height: 0;
		display: flex;
		align-items: center;
		justify-content: center;
		border: 1px solid #494949;
		border-right-color: #555;
		background: linear-gradient(#727272, #626262);
		line-height: 8px;
		font-weight: bold;
		color: #111;
	}
	.sends, .io { height: 22px; display: flex; flex-direction: column; gap: 1px; }
	.send { flex: 1; display: flex; align-items: stretch; gap: 3px; }
	.send .slot { flex: none; width: 26px; }
	.send-knob { width: 8px; height: 8px; margin-top: 1px; border-radius: 50%; border: 1px solid #444; border-left-color: #5ae07a; background: #777; }
	.slot.route { background: linear-gradient(#c4c4c4, #a2a2a2); border-color: #555; }
	.slot.on { background: linear-gradient(#a5f3f8, #6fd5de); border-color: #3f8f96; }
	.group { height: 10px; margin-bottom: 1px; background: #5a5a5a; border: 1px solid #515151; }
	.auto { flex: none; height: 10px; }
	.levels { height: 102px; margin-top: 4px; display: flex; gap: 2px; }
	.meter { width: 12px; flex: none; display: flex; flex-direction: column; gap: 1px; }
	.peak { display: flex; justify-content: center; height: 7px; background: #551f14; border: 1px solid #3d1a12; color: #f2953c; line-height: 5px; }
	.bars { flex: 1; display: flex; gap: 2px; background: #6d625f; }
	.bar { flex: 1; display: flex; align-items: flex-end; background: repeating-linear-gradient(#4a3431 0 2px, #2c2020 2px 3px); }
	.fill { width: 100%; background: repeating-linear-gradient(#dca566 0 2px, #a3743f 2px 3px); }
	.controls { flex: 1; display: flex; flex-direction: column; }
	.pan { width: 22px; height: 22px; border-radius: 50%; background: #595959; border: 1px solid #484848; display: flex; align-items: center; justify-content: center; }
	.pan i { width: 15px; height: 15px; border-radius: 50%; background: linear-gradient(#848484, #6c6c6c); border: 1px solid #505050; }
	.pan.hidden { visibility: hidden; }
	.fader { position: relative; height: 63px; margin: 4px 0 4px 2px; width: 20px; }
	.fader input {
		appearance: none;
		display: block;
		writing-mode: vertical-lr;
		direction: rtl;
		width: 3px;
		height: 63px;
		margin: 0;
		background: linear-gradient(to top, #94e7ea var(--v), #4a4a4a var(--v));
	}
	.fader input::-webkit-slider-thumb { appearance: none; width: 3px; height: 9px; background: #9b9b9b; }
	.fader output {
		position: absolute;
		left: 3px;
		width: 17px;
		height: 9px;
		margin-bottom: -4px;
		border: 1px solid #888;
		background: #26393f;
		color: #a7f0f2;
		line-height: 7px;
		text-align: center;
		font-weight: bold;
	}
	.pair { display: flex; gap: 2px; margin-left: 4px; }
	.pair button { display: flex; justify-content: center; width: 8px; height: 9px; border: 1px solid #4a4a4a; border-radius: 1px; background: #808080; color: #222; line-height: 7px; }
	.pair .wide { width: 19px; }
	.format { display: flex; justify-content: space-between; height: 9px; margin-top: 2px; }
	.format .rings { display: flex; align-items: center; justify-content: center; width: 14px; border: 1px solid #484848; background: #7a7a7a; color: #222; }
	.format .pair { margin: 0 0 0 auto; }
	.name {
		display: flex;
		flex-direction: column;
		align-items: center;
		height: 15px;
		margin-top: 6px;
		border-radius: 2px;
		line-height: 8px;
		font-weight: bold;
		white-space: nowrap;
	}

	.light { color: #77747a; }
	.light .eq { background: #fdf8fb; border-color: #b8b3b8; color: #8b888c; }
	.light .slot { background: linear-gradient(#efebf1, #d3cfd6); border-color: #8e8a90; color: #77747a; }
	.light .slot.route { background: #fbf8fc; color: #111; }
	.light .slot.auto { color: #222; }
	.light .slot.on { background: linear-gradient(#a9fbff, #79e6f0); border-color: #4ca8b0; color: #123; }
	.light .group { background: #a19ea2; border-color: #8b888c; }
	.light .pan { background: #a7a3a8; border-color: #8d898e; }
	.light .pan i { background: #ece8ec; border-color: #bbb; }
	.light .fader input { background: linear-gradient(to top, #7fe3ea var(--v), #98959a var(--v)); }
	.light .fader input::-webkit-slider-thumb { background: #f5f5f5; }
	.light .pair button, .light .rings { background: #f0ecf1; border-color: #a09ca2; color: #555; }
	.selected {
		margin: 0 -1px;
		padding: 2px 3px 0;
		background: linear-gradient(#dcd8dc, #dcd8dc calc(100% - 9px), #94f8fb calc(100% - 9px));
		box-shadow: inset 0 0 0 2px #5de79f;
		height: 371px;
	}
	.side { padding: 0 8px 7px 7px; }
	.side .setting { flex: none; height: 10px; margin-bottom: 3px; }
	.side .name { height: 10px; line-height: 10px; margin-top: 4px; }

	.mixer-foot { display: flex; justify-content: space-between; height: 10px; padding-right: 10px; background: linear-gradient(#bdb8bf, #e2dce4 50%); }
	.foot-icon { width: 21px; display: flex; align-items: center; justify-content: center; background: #eee8ef; border-right: 1px solid #777; }
	.mixer-foot > svg { background: #f6f0f7; }
	.tabs { display: flex; height: 14px; border-top: 1px solid #a9a3aa; background: #f8effb; font-weight: bold; }
	.tabs button { width: 55px; border-right: 1px solid #b9b3ba; line-height: 12px; }
	.tabs .active { background: linear-gradient(#8d8a90, #b1adb4); }

	/* event list */
	.lists { width: 238px; flex: none; display: flex; flex-direction: column; background: #dad4da; border: 1px solid #a19ca1; }
	.list-tabs { display: flex; height: 13px; font-weight: bold; background: linear-gradient(#b3afb4, #bfbbc0); }
	.list-tabs button { flex: 1; border-left: 1px solid #98949a; border-bottom: 1px solid #98949a; }
	.list-tabs .active { border-color: transparent; background: #dad4da; }
	.list-tools { display: flex; align-items: center; justify-content: space-between; height: 22px; padding: 0 8px 0 5px; }
	.list-tools.second { height: 12px; padding-right: 6px; }
	.segments.grey .active { background: #9b989e; }
	.segments.grey button { padding: 0 6px; border: 0; }
	.quant { width: 77px; margin-left: 14px; }
	.filters { display: grid; grid-template-columns: repeat(4, 1fr); margin: 4px 5px 6px; border: 1px solid #8e8a90; font-weight: bold; background: #efe9f0; }
	.filters button { height: 14px; border-right: 1px solid #9a969c; overflow: hidden; }
	.filters button:nth-child(-n+4) { border-bottom: 1px solid #9a969c; }
	.filters button:nth-child(4n) { border-right: 0; }
	.filters .active { background: #8d8b90; }
	.events { flex: 1; display: flex; align-items: flex-start; min-height: 0; border-bottom: 1px solid #8e8a90; }
	.events .rail-v { align-self: stretch; width: 7px; background: #e6dfe6; border-left: 1px solid #999; }
	table { flex: 1; height: 524px; table-layout: fixed; border-collapse: separate; border-spacing: 0; font: 7px/8px "Noto Sans", "Open Sans", sans-serif; }
	.c-pos { width: 72px; }
	.c-status { width: 36px; }
	.c-ch { width: 16px; }
	.c-num { width: 20px; }
	.c-val { width: 20px; }
	th { height: 11px; text-align: left; padding: 0 3px; font-weight: 600; background: linear-gradient(#fff, #e9e3ea); border-right: 1px solid #aaa; border-bottom: 1px solid #999; }
	td { height: 10px; padding: 0 3px; border-right: 1px solid #8f8d91; }
	th:last-child, td:last-child { border-right: 0; }
	.note td { background: #a9a7aa; border-bottom: 1px solid #c3c1c4; }
	.empty td { background: #d8d6d7; }
	.empty:nth-child(odd) td { background: #c5cac9; }
	.r { text-align: right; }
	.pos { display: grid; grid-template-columns: 22px 13px 13px 17px; text-align: right; }
	.len { display: grid; grid-template-columns: 19px 10px 13px 16px; text-align: right; justify-content: end; }
	.current { position: relative; }
	.current::after { content: ''; position: absolute; left: 0; right: 0; top: 7px; height: 1px; background: #f4f4f4; }
	.list-status { height: 14px; padding: 2px 7px; }

	/* transport */
	.transport {
		display: grid;
		grid-template-columns: 1fr 325px 1fr;
		align-items: center;
		height: 31px;
		margin: 4px 5px 3px;
		border: 1px solid #e9e4ea;
		border-radius: 4px;
		background: linear-gradient(#e5dfe7, #bab5ba);
	}
	.rec-side { display: flex; justify-content: flex-end; padding-right: 15px; }
	.record { width: 21px; height: 21px; border-radius: 50%; border: 2px solid #a4a0a5; background: #dcd8dd; display: flex; align-items: center; justify-content: center; }
	.record i { width: 11px; height: 11px; border-radius: 50%; border: 2px solid #8a878c; background: radial-gradient(#333 35%, #ccc 45%); }
	.lcd {
		display: grid;
		grid-template-columns: 83px 75px 47px 73px 1fr;
		height: 24px;
		padding: 2px 0;
		border-radius: 3px;
		background: #3b3b3d;
		color: #f1f5f5;
		font-size: 9px;
		font-weight: bold;
		line-height: 10px;
	}
	.lcd > div { display: flex; flex-direction: column; padding: 0 4px; border-right: 1px solid #2b2b2c; white-space: pre; }
	.lcd > div:last-child { border: 0; }
	.beats { display: grid; grid-template-columns: 26px 14px 15px 19px; text-align: right; }
	.lcd .speed { align-items: center; }
	.dim { align-self: flex-end; color: #858585; font-weight: normal; }
	.lcd .tempo { align-items: flex-end; }
	.lcd .midi { padding-left: 9px; }
	.lcd .cpu { font-size: 5px; }
	.cpu span { display: flex; align-items: center; height: 10px; }
	.cpu i { width: 4px; height: 5px; background: #bbb; }
	.cpu em { flex: 1; height: 5px; margin: 0 1px; background: repeating-linear-gradient(90deg, #2c2c2e 0 2px, #3b3b3d 2px 3px); }
	.mode-side { display: flex; align-items: center; justify-content: space-between; padding: 0 13px 0 15px; }
	.modes { display: flex; gap: 5px; padding: 1px 2px; border-radius: 10px; background: #a5a1a6; }
	.modes button { display: flex; align-items: center; justify-content: center; width: 17px; height: 17px; border: 1px solid #8a868b; border-radius: 50%; background: #dcd8dd; }
	.volume { display: flex; align-items: center; gap: 3px; }
	.volume input { appearance: none; width: 54px; height: 3px; margin: 0; border: 1px solid #99959a; border-radius: 2px; background: #eee; }
	.volume input::-webkit-slider-thumb { appearance: none; width: 7px; height: 7px; border-radius: 50%; border: 1px solid #555; background: #f3f3f3; }

	.badge { position: absolute; left: 28px; top: 0; }
	.mouse { position: absolute; left: 147px; top: 418px; }
</style>
